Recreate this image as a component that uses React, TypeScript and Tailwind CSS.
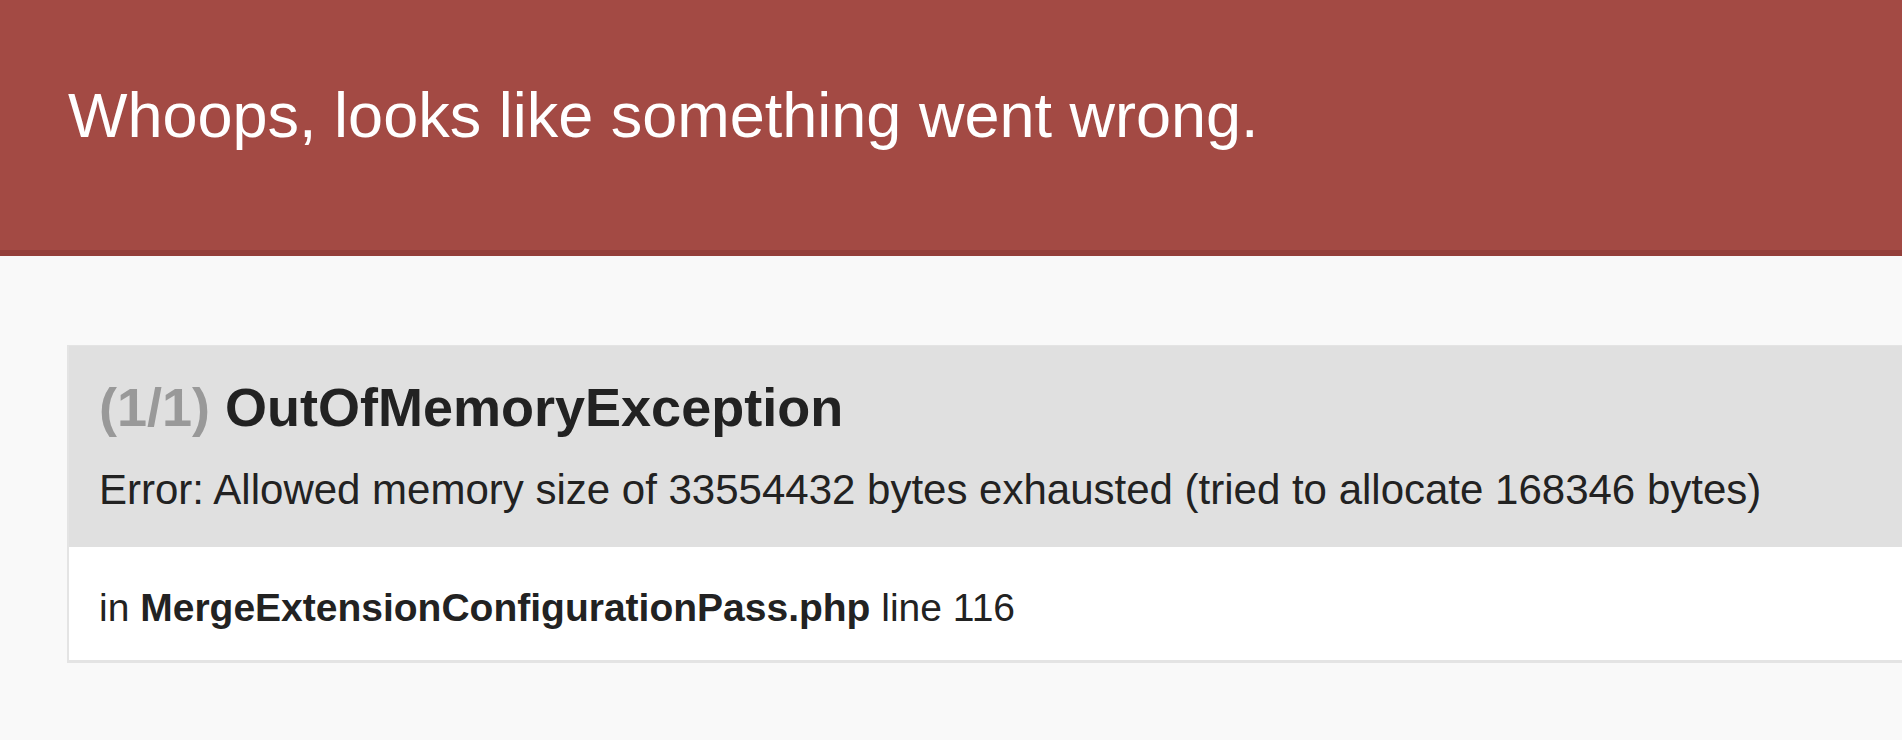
export default function App() {
    const font = { fontFamily: '"Liberation Sans", Arial, Helvetica, sans-serif' };

    return (
        <div className="h-[740px] overflow-hidden bg-[#f9f9f9]" style={font}>
            <header className="h-[256px] border-b-[6px] border-[#943f3a] bg-[#a34a44] pl-[68px] pt-[84px]">
                <h1 className="text-[63px] leading-none font-normal text-white">Whoops, looks like something went wrong.</h1>
            </header>

            <div className="pt-[89px]">
                <div className="-mr-10 ml-[67px] border-t border-b-[3px] border-l-2 border-[#e4e4e4] bg-white">
                    <div className="bg-[#e0e0e0] px-[30px] pt-[34px] pb-[36px]">
                        <h2 className="text-[54px] leading-none font-bold text-[#222]">
                            <span className="text-[#999]">(1/1)</span> OutOfMemoryException
                        </h2>
                        <p className="mt-[35px] text-[42px] leading-none text-[#222]">
                            Error: Allowed memory size of 33554432 bytes exhausted (tried to allocate 168346 bytes)
                        </p>
                    </div>
                    <div className="px-[30px] pt-[41px] pb-[33px] text-[39px] leading-none text-[#222]">
                        in <strong className="font-bold">MergeExtensionConfigurationPass.php</strong> line 116
                    </div>
                </div>
            </div>
        </div>
    );
}
